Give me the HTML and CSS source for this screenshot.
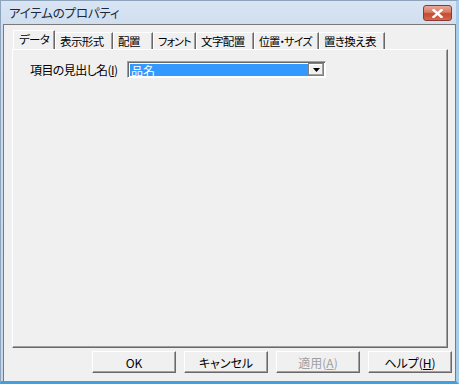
FILE: index.html
```html
<!DOCTYPE html>
<html lang="ja">
<head>
    <meta charset="UTF-8">
    <title>アイテムのプロパティ</title>
    <link rel="stylesheet" href="styles.css">
</head>
<body>
    <div class="window">
        <div class="titlebar">
            <span class="title">アイテムのプロパティ</span>
            <button class="close-btn" aria-label="閉じる">
                <svg width="11" height="9" viewBox="0 0 11 9">
                    <path d="M1.5 1 L9.5 8 M9.5 1 L1.5 8" stroke="#fff" stroke-width="2.4" stroke-linecap="square"/>
                </svg>
            </button>
        </div>

        <div class="client">
            <div class="tabs">
                <div class="tab tab-data active">データ</div>
                <div class="tab tab-format">表示形式</div>
                <div class="tab tab-place">配置</div>
                <div class="tab tab-font">フォント</div>
                <div class="tab tab-align">文字配置</div>
                <div class="tab tab-pos">位置・サイズ</div>
                <div class="tab tab-replace">置き換え表</div>
            </div>

            <div class="panel">
                <div class="field-row">
                    <label class="field-label">項目の見出し名(<u>I</u>)</label>
                    <div class="combo">
                        <span class="combo-value">品名</span>
                        <span class="combo-arrow">
                            <svg width="7" height="4" viewBox="0 0 7 4"><path d="M0 0 H7 L3.5 4 Z" fill="#000"/></svg>
                        </span>
                    </div>
                </div>
            </div>

            <div class="buttons">
                <button class="btn">OK</button>
                <button class="btn">キャンセル</button>
                <button class="btn" disabled>適用(<u>A</u>)</button>
                <button class="btn">ヘルプ(<u>H</u>)</button>
            </div>
        </div>
    </div>
</body>
</html>
```

FILE: styles.css
```css
* {
    margin: 0;
    padding: 0;
    box-sizing: border-box;
}

body {
    width: 459px;
    height: 384px;
    background: #ffffff;
    font-family: "Noto Sans CJK JP", "Noto Sans", sans-serif;
    font-size: 12px;
    font-feature-settings: "palt";
    color: #000;
}

.window {
    width: 459px;
    height: 384px;
    display: flex;
    flex-direction: column;
    background: linear-gradient(#d9e5f3, #cddcee 30px, #c6d7ec);
    border: 1px solid #8ea3bc;
    border-bottom: 3px solid #3f9fe0;
    border-right: 3px solid #a8cdeb;
    padding: 0 0 0 2px;
}

.titlebar {
    height: 23px;
    display: flex;
    align-items: center;
    justify-content: space-between;
    padding: 0 4px 0 6px;
    flex-shrink: 0;
}

.title {
    font-size: 12.5px;
    color: #1b2a3a;
    letter-spacing: -0.2px;
}

.close-btn {
    width: 29px;
    height: 16px;
    margin-top: 1px;
    border: 1px solid #8a3a2e;
    border-radius: 3px;
    background: linear-gradient(#e9a99a, #d77a64 45%, #c54a2f 55%, #d2694f);
    display: flex;
    align-items: center;
    justify-content: center;
}

.client {
    flex: 1;
    background: #f0f0f0;
    border: 1px solid #7a7a7a;
    border-bottom: none;
    padding: 6px 3px 0 8px;
    display: flex;
    flex-direction: column;
}

.tabs {
    display: flex;
    height: 18px;
    padding-left: 1px;
}

.tab {
    height: 17px;
    margin-top: 1px;
    padding: 0 0 0 4px;
    line-height: 16px;
    font-size: 11.5px;
    white-space: nowrap;
    border-top: 1px solid #ffffff;
    border-left: 1px solid #ffffff;
    border-right: 1px solid #696969;
    box-shadow: inset -1px 0 0 #a0a0a0;
    letter-spacing: -0.6px;
}

.tab-data { width: 42px; }
.tab-format { width: 58px; }
.tab-place { width: 40px; }
.tab-font { width: 43px; }
.tab-align { width: 58px; }
.tab-pos { width: 65px; }
.tab-replace { width: 66px; }

.tab-font,
.tab-pos {
    font-size: 11px;
    letter-spacing: -0.8px;
}

.tab.active {
    height: 19px;
    margin-top: -1px;
    padding-left: 5px;
    background: #f0f0f0;
    position: relative;
    z-index: 1;
}

.panel {
    width: 436px;
    height: 299px;
    border-top: 1px solid #ffffff;
    border-left: 1px solid #ffffff;
    border-right: 1px solid #696969;
    border-bottom: 1px solid #696969;
    box-shadow: inset -1px -1px 0 #a0a0a0;
    padding: 11px 0 0 17px;
}

.field-row {
    display: flex;
    align-items: center;
}

.field-label {
    width: 97px;
    font-size: 12px;
    letter-spacing: -0.6px;
}

.field-label u,
.btn u {
    text-decoration: underline;
}

.combo {
    width: 199px;
    height: 17px;
    display: flex;
    border-top: 1px solid #a0a0a0;
    border-left: 1px solid #a0a0a0;
    border-right: 1px solid #ffffff;
    border-bottom: 1px solid #ffffff;
    box-shadow: inset 1px 1px 0 #696969;
    padding: 2px 1px 1px 2px;
    background: #ffffff;
}

.combo-value {
    flex: 1;
    background: #3399ff;
    color: #ffffff;
    font-size: 12px;
    line-height: 13px;
    padding-left: 1px;
}

.combo-arrow {
    width: 16px;
    margin-top: -1px;
    background: #f0f0f0;
    border: 1px solid #808080;
    box-shadow: inset -1px -1px 0 #a0a0a0, inset 1px 1px 0 #ffffff;
    display: flex;
    align-items: center;
    justify-content: center;
}

.buttons {
    display: flex;
    justify-content: flex-end;
    gap: 8px;
    padding-top: 3px;
}

.btn {
    width: 84px;
    height: 22px;
    font-family: "Noto Sans CJK JP", "Noto Sans", sans-serif;
    font-size: 12px;
    font-feature-settings: "palt";
    background: #f0f0f0;
    color: #000;
    border-top: 1px solid #ffffff;
    border-left: 1px solid #ffffff;
    border-right: 1px solid #696969;
    border-bottom: 1px solid #696969;
    box-shadow: inset -1px -1px 0 #a0a0a0;
}

.btn:disabled {
    color: #a0a0a0;
}
```
